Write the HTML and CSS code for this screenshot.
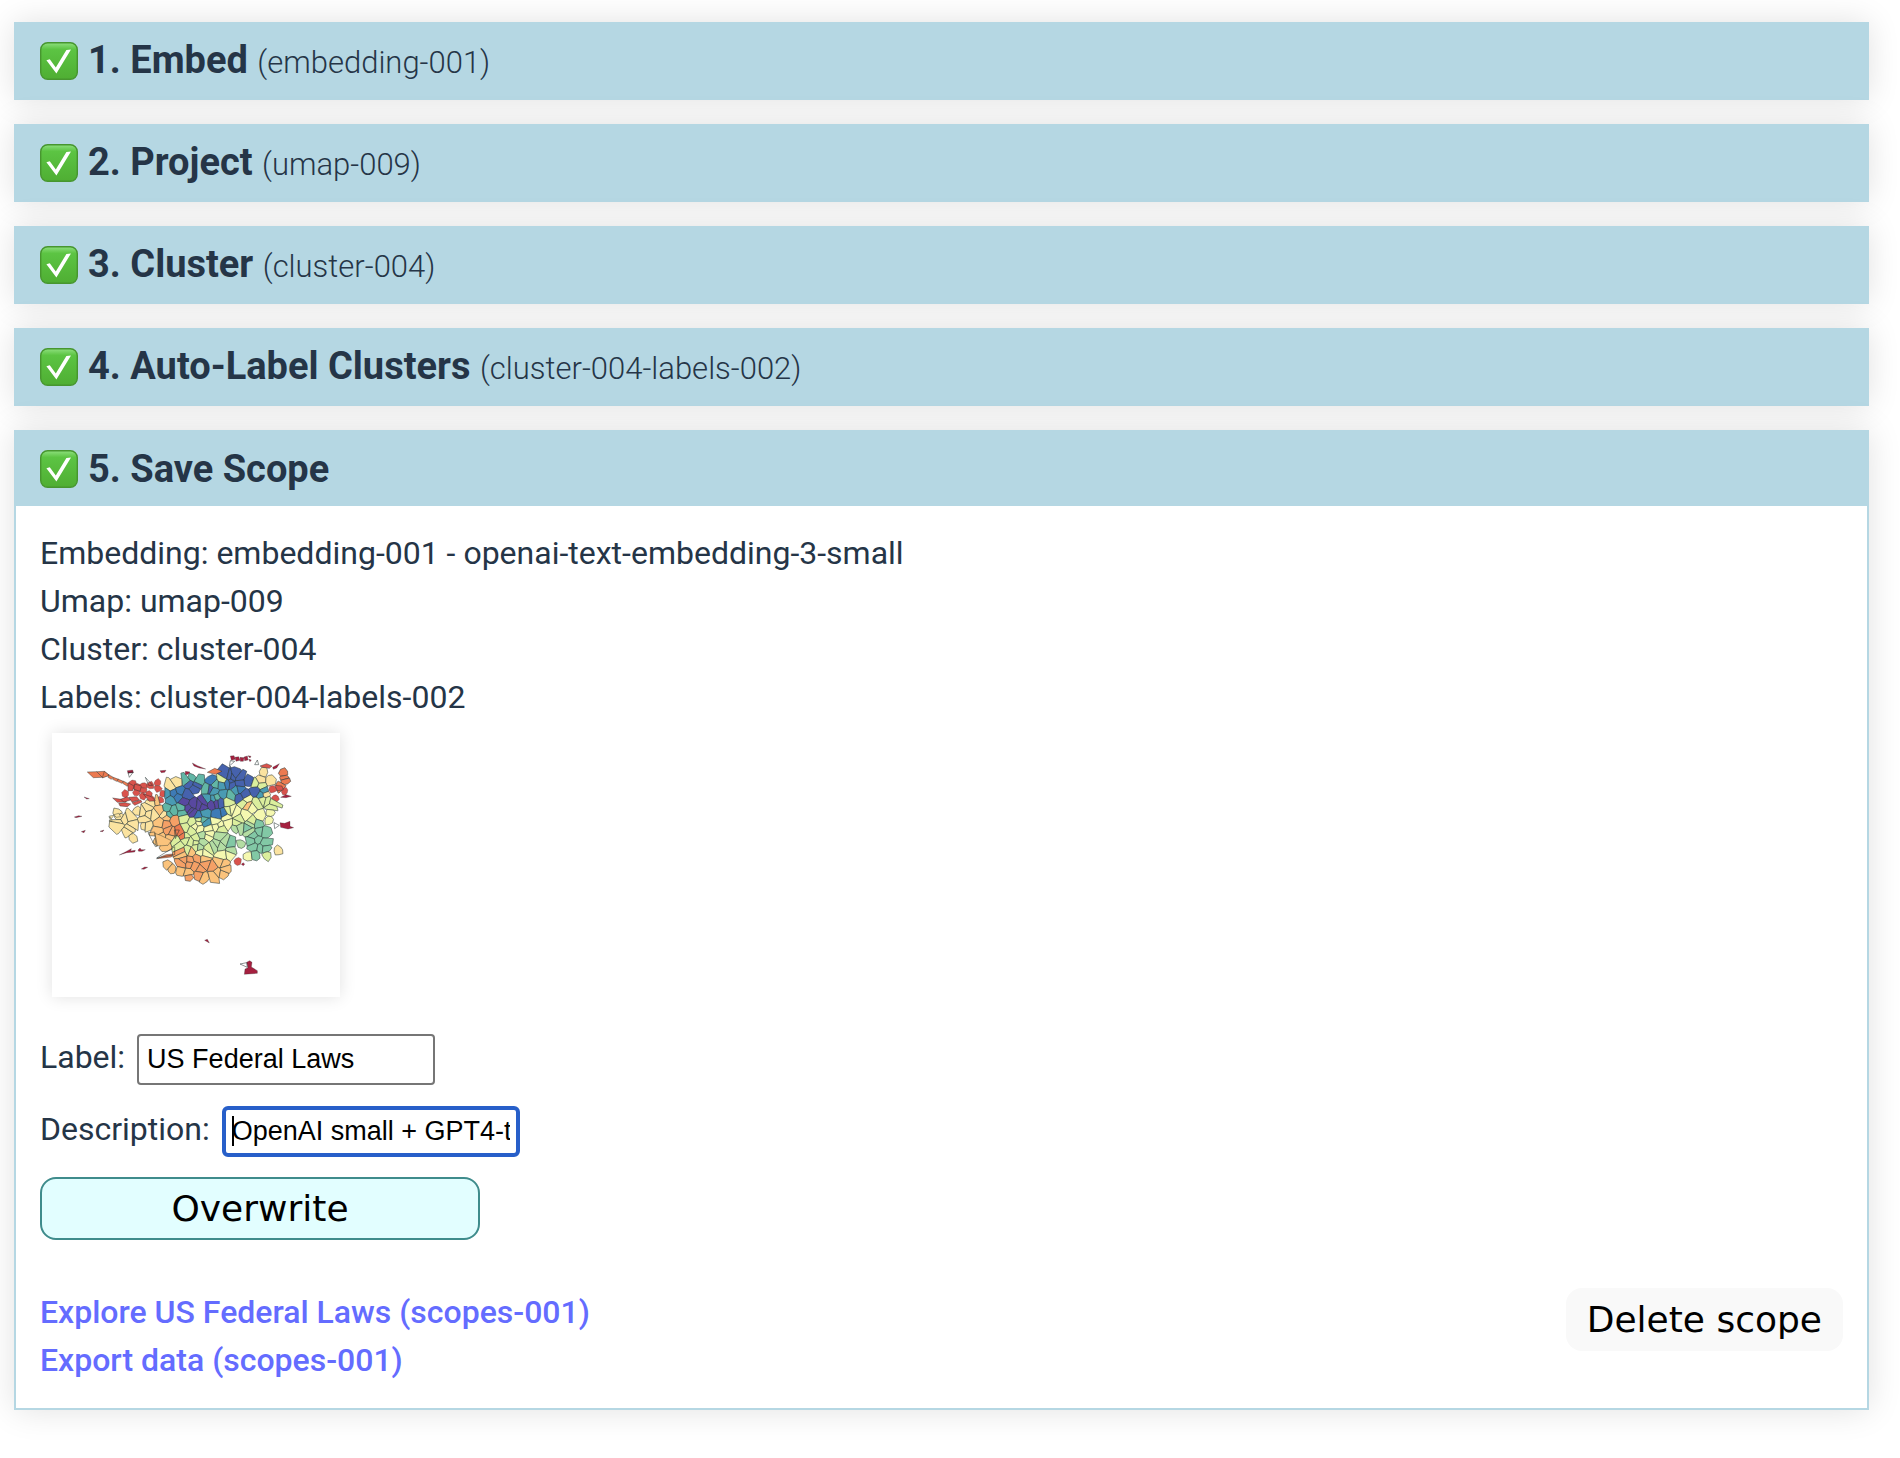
FILE: index.html
```html
<!DOCTYPE html>
<html lang="en">
<head>
<meta charset="utf-8">
<meta name="viewport" content="width=device-width, initial-scale=1">
<title>Scope setup</title>
<link rel="stylesheet" href="styles.css">
</head>
<body>
<svg class="defs" width="0" height="0" aria-hidden="true">
  <defs>
    <linearGradient id="check-fill" x1="0" y1="0" x2="0" y2="1">
      <stop offset="0" stop-color="#8fe07f"/>
      <stop offset=".18" stop-color="#5cc443"/>
      <stop offset="1" stop-color="#4fae33"/>
    </linearGradient>
    <symbol id="check" viewBox="0 0 38 38">
      <rect x="0.7" y="0.7" width="36.6" height="36.6" rx="7" fill="url(#check-fill)" stroke="#47962f" stroke-width="1.4"/>
      <path d="M6.4 18.2 L9.8 17.2 L15.8 25.4 L26.4 8 L31 7.4 L16.4 31.6 Z" fill="#fff"/>
    </symbol>
  </defs>
</svg>
<main class="steps">
  <section class="step">
    <h2 class="step-head"><svg class="check"><use href="#check"/></svg><span>1. Embed <small>(embedding-001)</small></span></h2>
  </section>
  <section class="step">
    <h2 class="step-head"><svg class="check"><use href="#check"/></svg><span>2. Project <small>(umap-009)</small></span></h2>
  </section>
  <section class="step">
    <h2 class="step-head"><svg class="check"><use href="#check"/></svg><span>3. Cluster <small>(cluster-004)</small></span></h2>
  </section>
  <section class="step">
    <h2 class="step-head"><svg class="check"><use href="#check"/></svg><span>4. Auto-Label Clusters <small>(cluster-004-labels-002)</small></span></h2>
  </section>
  <section class="step">
    <h2 class="step-head"><svg class="check"><use href="#check"/></svg><span>5. Save Scope</span></h2>
    <div class="step-body">
      <div class="summary">
        <div>Embedding: embedding-001 - openai-text-embedding-3-small</div>
        <div>Umap: umap-009</div>
        <div>Cluster: cluster-004</div>
        <div>Labels: cluster-004-labels-002</div>
      </div>
      <svg class="map" id="map" viewBox="36 39 864 792" role="img" aria-label="Cluster map"></svg>
      <form class="form">
        <div class="field">
          <label for="label">Label:</label>
          <input class="text" id="label" type="text" value="US Federal Laws">
        </div>
        <div class="field">
          <label for="description">Description:</label>
          <span class="active"><input class="text" id="description" type="text" value="OpenAI small + GPT4-turbo"><i class="caret"></i></span>
        </div>
        <button class="button save" type="button">Overwrite</button>
      </form>
      <div class="actions">
        <div class="links">
          <a href="#explore">Explore US Federal Laws (scopes-001)</a>
          <a href="#export">Export data (scopes-001)</a>
        </div>
        <button class="button delete" type="button">Delete scope</button>
      </div>
    </div>
  </section>
</main>
<script src="map.js"></script>
</body>
</html>
```
FILE: styles.css
```css
* { box-sizing: border-box; }

body {
  margin: 0;
  background: #fff;
  color: #253547;
  font-family: Roboto, sans-serif;
  font-size: 32px;
  line-height: 48px;
}

.defs { position: absolute; }

.steps {
  display: flex;
  flex-direction: column;
  gap: 24px;
  padding: 22px 31px 48px 14px;
}

.step {
  border: 2px solid #b5d7e3;
  background: #fff;
  box-shadow: 0 0 32px rgba(0, 0, 0, .12);
}

.step-head {
  display: flex;
  align-items: center;
  gap: 10px;
  height: 74px;
  margin: 0;
  padding: 0 24px;
  background: #b5d7e3;
  font-size: 38px;
  font-weight: 700;
  line-height: 48px;
}

.step-head small {
  font-size: 31px;
  font-weight: 300;
}

.check {
  flex: none;
  width: 38px;
  height: 38px;
}

.step-body { padding: 23px 24px 24px; }

.map {
  display: block;
  width: 288px;
  height: 264px;
  margin: 12px;
  background: #fff;
  box-shadow: 0 0 16px rgba(0, 0, 0, .12);
}

.form {
  display: flex;
  flex-direction: column;
  align-items: flex-start;
  gap: 21px;
  margin-top: 36px;
}

.field {
  display: flex;
  align-items: baseline;
  gap: 12px;
  height: 51px;
}

.text {
  display: block;
  width: 298px;
  height: 51px;
  padding: 0 8px;
  border: 2px solid #767676;
  border-radius: 4px;
  background: #fff;
  color: #000;
  font: 27px "Liberation Sans", Arial, sans-serif;
}

.active { position: relative; }

.active .text {
  padding: 0 6px;
  border: 4px solid #275fc9;
  border-radius: 6px;
}

.caret {
  position: absolute;
  top: 10px;
  left: 10px;
  width: 2px;
  height: 30px;
  background: #000;
}

.button {
  height: 63px;
  padding: 0 19px;
  border: 2px solid transparent;
  border-radius: 16px;
  color: #000;
  font: 36px "DejaVu Sans", sans-serif;
}

.save {
  width: 440px;
  border-color: #3f8c8c;
  background: #e2feff;
}

.delete { background: #f9f9f9; }

.actions {
  display: flex;
  justify-content: space-between;
  align-items: flex-start;
  margin-top: 48px;
}

.links {
  display: flex;
  flex-direction: column;
}

.links a {
  color: #646cff;
  font-weight: 500;
  text-decoration: none;
}
```
FILE: map.js
```js
// Draws the cluster map: dense cells as a clipped Voronoi diagram, outliers as polygons.
const colors = {
  P: '#5848a0', I: '#4662ad', B: '#3e7bb6', S: '#4a9bb3', T: '#62b6a6',
  G: '#82c8a5', L: '#b4dda3', Y: '#dbee9d', M: '#f5f8b0', C: '#fbe3a0',
  N: '#fbc37c', O: '#f5a066', D: '#ec7a50', R: '#d9534c', K: '#a5203f'
};

// One letter per cell; columns are 20 units apart, rows 17.
const rows = [
  '..................III...C.DD',
  '............TTTBYYIIIICCC.DD',
  '....RRRRR.CCYIITTSBIIIYYYDD.',
  '...RRRRRRSBBIIIISITSBIISSRR.',
  '......RRRSBBIITSSTSTIIBSCR..',
  '......CNNSBBPPPPPIYMYMYYYY..',
  '.....CCCNTTTPPPPPPMMYNMMYY..',
  '.CCC.CCCCTTTPPBSBBYMMMYMM...',
  '.CCCCCCCNNOOYYYTBMMMYYYMM...',
  '..CCCCC.NOOOYMMSMMMYLLLGG...',
  '...CC...NOODYYMMMYLLLGLGG...',
  '....C..NNN.DYYLMLLLLLGGGG...',
  '.......NNN.YYYYLLLLGLGGGGY..',
  '...........YYYLYLLLLLGGGGC..',
  '..........DONNMMOOMM.MG.Y...',
  '..........OOOONOOO.R........',
  '.........NNONOOOONN.........',
  '..........NN..ONNNN.........',
  '............NOONN...........'
];

const hash = n => { const v = Math.sin(n * 91.7 + 4.1) * 43758.5; return v - Math.floor(v); };
const seeds = [];
rows.forEach((row, r) => [...row].forEach((c, i) => {
  if (c === '.') return;
  const n = r * 31 + i;
  if (c !== 'R' && hash(n + 300) < .24) return;
  seeds.push({
    c,
    x: 200 + i * 20 + (r % 2 ? 4 : -4) + (hash(n) - .5) * 22,
    y: 163 + r * 17 + (hash(n + 700) - .5) * 18
  });
}));

// Keeps the part of a polygon that is nearer to a than to b.
function clip(poly, a, b) {
  const mx = (a.x + b.x) / 2, my = (a.y + b.y) / 2, dx = b.x - a.x, dy = b.y - a.y;
  const side = p => (p[0] - mx) * dx + (p[1] - my) * dy;
  const out = [];
  poly.forEach((p, i) => {
    const q = poly[(i + 1) % poly.length], s = side(p), t = side(q);
    if (s <= 0) out.push(p);
    if (s * t < 0) { const k = s / (s - t); out.push([p[0] + k * (q[0] - p[0]), p[1] + k * (q[1] - p[1])]); }
  });
  return out;
}

const svg = document.getElementById('map');
function draw(points, fill, width = 1.5) {
  const el = document.createElementNS('http://www.w3.org/2000/svg', 'polygon');
  el.setAttribute('points', points);
  el.setAttribute('fill', fill);
  el.setAttribute('stroke', '#1d2b2b');
  el.setAttribute('stroke-width', width);
  el.setAttribute('stroke-linejoin', 'round');
  svg.append(el);
}

seeds.forEach((s, n) => {
  // Cells with many close neighbours fill their whole area; edge cells stay small.
  const near = seeds.filter(o => Math.hypot(o.x - s.x, o.y - s.y) < 42).length;
  const radius = s.c === 'R' ? 12 : near > 8 ? 32 : near > 6 ? 21 : 15;
  const corners = 6 + n % 3;
  let poly = Array.from({ length: corners }, (_, k) => {
    const a = k * Math.PI * 2 / corners + hash(n + 50), d = radius * (.75 + hash(n * 7 + k) * .4);
    return [s.x + Math.cos(a) * d, s.y + Math.sin(a) * d];
  });
  seeds.forEach(o => {
    if (o !== s && Math.hypot(o.x - s.x, o.y - s.y) < 80) poly = clip(poly, s, o);
  });
  if (poly.length > 2) draw(poly.map(p => p.map(v => v.toFixed(1)).join()).join(' '), colors[s.c], s.c === 'R' ? .8 : 1.5);
});

const outliers = {
  D: ['142,156 170,155 187,172 160,173', '170,155 193,154 208,166 187,172', '193,154 208,166 187,174',
      '206,164 220,172 214,178 204,172', '220,172 236,178 230,184 218,178', '234,177 250,184 246,190 232,184',
      '250,183 266,192 262,199 248,190', '502,157 524,145 546,154 526,163', '378,404 398,402 394,411 350,416'],
  R: ['264,188 282,198 278,212 264,212', '284,192 304,198 300,214 282,208', '660,138 680,131 696,138 688,145 668,142',
      '218,234 244,238 262,236 258,246 232,247', '266,232 290,230 298,240 276,246',
      '236,250 256,248 272,252 262,260 240,258', '276,248 302,240 306,246 284,256', '310,222 334,230 346,242 328,244',
      '704,196 726,198 730,210 712,212', '242,238 262,230 272,240 252,246'],
  K: ['571,108 582,107 586,118 574,121', '585,112 596,110 600,121 588,124', '600,112 612,113 610,124 601,124',
      '612,111 622,108 624,120 614,122', '624,107 633,109 630,114', '626,118 634,120 630,125',
      '457,129 472,137 497,147 478,144 462,138', '360,152 378,151 374,157 364,158', '436,154 450,156 444,163 436,164',
      '262,152 278,150 280,158 264,160', '132,231 148,236 140,237', '103,291 116,287 126,289 108,293',
      '124,335 136,331 132,338', '180,334 192,330 188,335', '238,405 256,396 274,386 272,393 286,391 284,396 260,398',
      '294,390 300,384 304,389 316,389 306,394 296,394', '304,447 314,441 323,442 312,448', '604,433 609,428 614,432 610,437',
      '494,661 502,658 506,665 508,669', '620,727 629,722 636,727 634,741 652,752 652,760 613,763 615,747 624,743',
      '698,142 718,131 710,144 700,148', '722,232 738,224 754,229 738,233',
      '720,308 734,310 750,304 750,319 761,323 744,327 722,322'],
  C: ['208,288 222,286 214,296', '207,290 216,300 214,306', '222,284 236,280 242,290 228,292'],
  N: ['344,340 362,346 394,362 384,376 348,378']
};
Object.entries(outliers).forEach(([c, list]) => list.forEach(p => draw(p, colors[c], c === 'K' ? .8 : 1.2)));
['568,138 571,122 584,124', '600,732 620,728 622,742', '264,158 280,156 268,172', '324,338 344,336 352,378 346,380',
 '350,414 404,380 404,404', '316,172 326,196 338,196', '644,134 652,120 656,134', '403,330 418,330 406,356',
 '702,308 718,316 704,326'].forEach(p => draw(p, 'none'));
```
